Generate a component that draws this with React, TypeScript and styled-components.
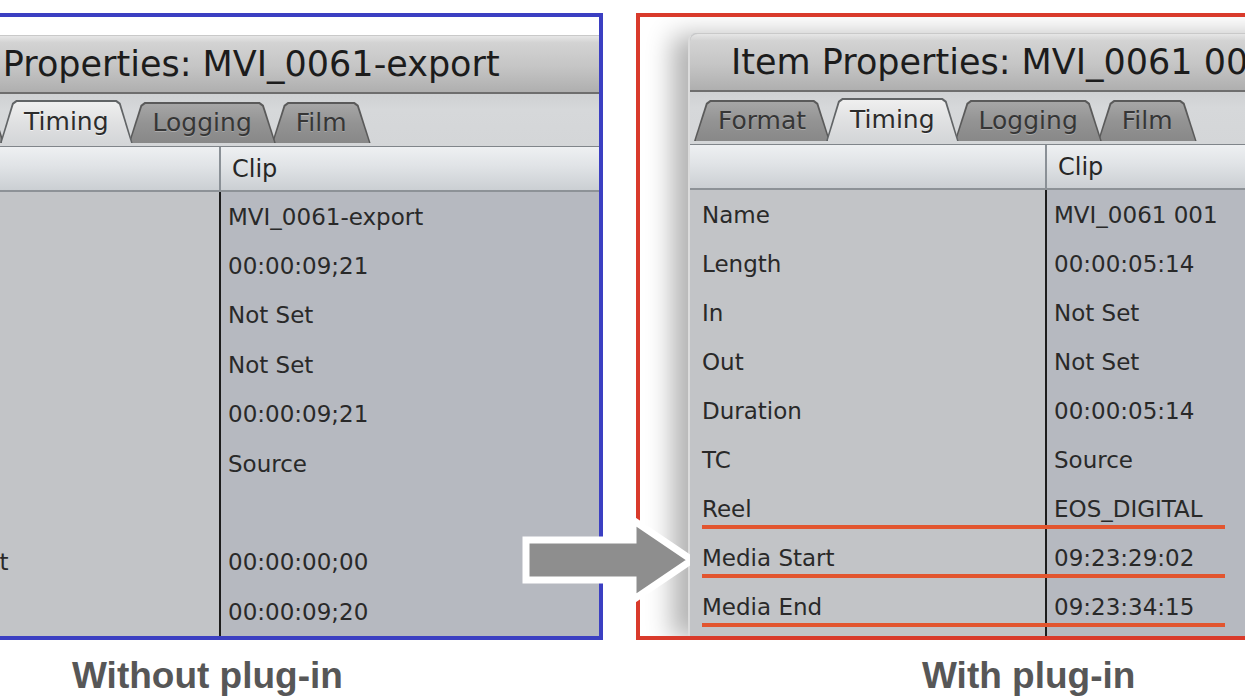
import React from "react";
import styled, { createGlobalStyle } from "styled-components";

const UI_FONT = `"DejaVu Sans", "Noto Sans", Verdana, sans-serif`;

const GlobalStyle = createGlobalStyle`
  *, *::before, *::after { box-sizing: border-box; }
  html, body { margin: 0; padding: 0; background: #ffffff; }
  body { font-family: ${UI_FONT}; }
`;

const Page = styled.div`
  position: relative;
  width: 1245px;
  height: 700px;
  overflow: hidden;
  background: #ffffff;
`;

const Panels = styled.div`
  display: flex;
  gap: 33px;
  padding-top: 13px;
`;

const Frame = styled.section<{ $color: string; $open: "left" | "right"; $width: number; $inset: number }>`
  flex: none;
  width: ${(p) => p.$width}px;
  height: 627px;
  border: 4px solid ${(p) => p.$color};
  ${(p) => (p.$open === "left" ? "border-left: none;" : "border-right: none;")}
  padding-top: ${(p) => p.$inset}px;
  background: #ffffff;
  overflow: hidden;
  display: flex;
  flex-direction: column;
`;

const Window = styled.div<{ $offset: number; $width: number; $shadow?: boolean }>`
  flex: 1;
  width: ${(p) => p.$width}px;
  margin-left: ${(p) => p.$offset}px;
  border-left: 2px solid #dcdcdc;
  border-top-left-radius: 8px;
  display: flex;
  flex-direction: column;
  background: #c2c4c7;
  box-shadow: ${(p) => (p.$shadow ? "-16px 2px 26px rgba(0, 0, 0, 0.3)" : "none")};
`;

const TitleBar = styled.header<{ $indent: number }>`
  height: 59px;
  padding-left: ${(p) => p.$indent}px;
  display: flex;
  align-items: center;
  white-space: nowrap;
  font-size: 35px;
  color: #1c1c1c;
  border-top-left-radius: 8px;
  border-top: 1px solid #c9c9c9;
  border-bottom: 2px solid #6e6e6e;
  background: linear-gradient(#e6e6e6 0%, #d3d3d3 12%, #c5c5c5 55%, #afafaf 100%);
`;

const TabStrip = styled.nav`
  height: 53px;
  display: flex;
  align-items: flex-end;
  padding: 0 0 3px 4px;
  background: linear-gradient(#cfd1d3, #d6d8da 30%, #d4d6d8);
  border-bottom: 1px solid #80858a;
`;

const Tab = styled.div<{ $active?: boolean; $z: number }>`
  position: relative;
  z-index: ${(p) => p.$z};
  height: ${(p) => (p.$active ? 43 : 41)}px;
  padding: 0 24px;
  margin-left: -4px;
  display: flex;
  align-items: center;
  justify-content: center;
  white-space: nowrap;
  font-size: 25px;
  color: ${(p) => (p.$active ? "#2c2c2c" : "#363636")};
  text-shadow: ${(p) => (p.$active ? "0 1px 0 rgba(255,255,255,0.6)" : "0 1px 0 rgba(255,255,255,0.25)")};

  &:first-child {
    margin-left: 0;
  }

  &::before,
  &::after {
    content: "";
    position: absolute;
    z-index: -1;
    clip-path: polygon(12px 3px, 16px 0, calc(100% - 16px) 0, calc(100% - 12px) 3px, 100% 100%, 0 100%);
  }

  &::before {
    inset: 0;
    background: ${(p) => (p.$active ? "#616466" : "#5a5a5a")};
  }

  &::after {
    inset: 1.5px 1.5px 0;
    background: ${(p) =>
      p.$active
        ? "linear-gradient(#efefef, #e0e1e2 50%, #d4d6d8)"
        : "linear-gradient(#a6a6a6, #939393 50%, #888888)"};
  }
`;

const HeaderRow = styled.div`
  height: 45px;
  display: grid;
  grid-template-columns: 357px 1fr;
  background: linear-gradient(#eef0f2 0%, #e0e3e6 45%, #cbcfd3 100%);
  border-bottom: 2px solid #8d9297;
`;

const HeaderCell = styled.div<{ $divider?: boolean }>`
  display: flex;
  align-items: center;
  padding-left: 11px;
  font-size: 24px;
  color: #262626;
  border-right: ${(p) => (p.$divider ? "2px solid #8a9096" : "none")};
`;

const Body = styled.div`
  flex: 1;
  display: grid;
  grid-template-columns: 357px 1fr;
`;

const LabelColumn = styled.div`
  position: relative;
  z-index: 1;
  background: #c2c4c7;
  border-right: 2px solid #1c1c1c;
`;

const ValueColumn = styled.div`
  background: #b6b9c0;
`;

const Cell = styled.div<{ $pad: number; $height: number; $mark?: boolean }>`
  position: relative;
  height: ${(p) => p.$height}px;
  display: flex;
  align-items: center;
  padding-left: ${(p) => p.$pad}px;
  white-space: nowrap;
  font-size: 23px;
  color: #292929;

  ${(p) =>
    p.$mark &&
    `
    &::after {
      content: "";
      position: absolute;
      left: 12px;
      bottom: 4px;
      width: 523px;
      height: 4px;
      background: #e2552f;
    }
  `}
`;

const Captions = styled.div`
  display: grid;
  grid-template-columns: 636px 1fr;
  margin-top: 17px;
`;

const Caption = styled.p<{ $indent: number }>`
  margin: 0;
  padding-left: ${(p) => p.$indent}px;
  font-family: "Liberation Sans", Arial, sans-serif;
  font-weight: bold;
  font-size: 37px;
  line-height: 37px;
  color: #575757;
  white-space: nowrap;
`;

const ArrowMark = styled.svg`
  position: absolute;
  left: 516px;
  top: 511px;
  width: 186px;
  height: 100px;
  overflow: visible;
`;

type Row = { label: string; value: string; mark?: boolean };

const LABELS = ["Name", "Length", "In", "Out", "Duration", "TC", "Reel", "Media Start", "Media End"];

const withoutPlugin: Row[] = [
  "MVI_0061-export",
  "00:00:09;21",
  "Not Set",
  "Not Set",
  "00:00:09;21",
  "Source",
  "",
  "00:00:00;00",
  "00:00:09;20",
].map((value, i) => ({ label: LABELS[i], value }));

const withPlugin: Row[] = [
  "MVI_0061 001",
  "00:00:05:14",
  "Not Set",
  "Not Set",
  "00:00:05:14",
  "Source",
  "EOS_DIGITAL",
  "09:23:29:02",
  "09:23:34:15",
].map((value, i) => ({ label: LABELS[i], value, mark: i >= 6 }));

const TABS = ["Format", "Timing", "Logging", "Film"];
const ACTIVE_TAB = 1;

function PropertiesWindow({
  title,
  rows,
  offset,
  width,
  indent,
  rowHeight,
  shadow,
}: {
  title: string;
  rows: Row[];
  offset: number;
  width: number;
  indent: number;
  rowHeight: number;
  shadow?: boolean;
}) {
  return (
    <Window $offset={offset} $width={width} $shadow={shadow}>
      <TitleBar $indent={indent}>{title}</TitleBar>
      <TabStrip>
        {TABS.map((t, i) => (
          <Tab key={t} $active={i === ACTIVE_TAB} $z={i === ACTIVE_TAB ? 10 : TABS.length - i}>
            {t}
          </Tab>
        ))}
      </TabStrip>
      <HeaderRow>
        <HeaderCell $divider />
        <HeaderCell>Clip</HeaderCell>
      </HeaderRow>
      <Body>
        <LabelColumn>
          {rows.map((r) => (
            <Cell key={r.label} $pad={12} $height={rowHeight} $mark={r.mark}>
              {r.label}
            </Cell>
          ))}
        </LabelColumn>
        <ValueColumn>
          {rows.map((r) => (
            <Cell key={r.label} $pad={7} $height={rowHeight}>
              {r.value}
            </Cell>
          ))}
        </ValueColumn>
      </Body>
    </Window>
  );
}

export default function App() {
  return (
    <Page>
      <GlobalStyle />
      <Panels>
        <Frame $color="#3b3fc2" $open="left" $width={603} $inset={18}>
          <PropertiesWindow
            title="Item Properties: MVI_0061-export"
            rows={withoutPlugin}
            offset={-138}
            width={740}
            indent={48}
            rowHeight={49.4}
          />
        </Frame>
        <Frame $color="#d93a2b" $open="right" $width={640} $inset={16}>
          <PropertiesWindow
            title="Item Properties: MVI_0061 001"
            rows={withPlugin}
            offset={48}
            width={620}
            indent={41}
            rowHeight={49}
            shadow
          />
        </Frame>
      </Panels>
      <Captions>
        <Caption $indent={72}>Without plug-in</Caption>
        <Caption $indent={286}>With plug-in</Caption>
      </Captions>
      <ArrowMark viewBox="0 0 186 100">
        <path
          d="M10 29 H117 V9 L176 49 L117 89 V69 H10 Z"
          fill="#8e8e8e"
          stroke="#ffffff"
          strokeWidth={7}
          strokeLinejoin="miter"
        />
      </ArrowMark>
    </Page>
  );
}
